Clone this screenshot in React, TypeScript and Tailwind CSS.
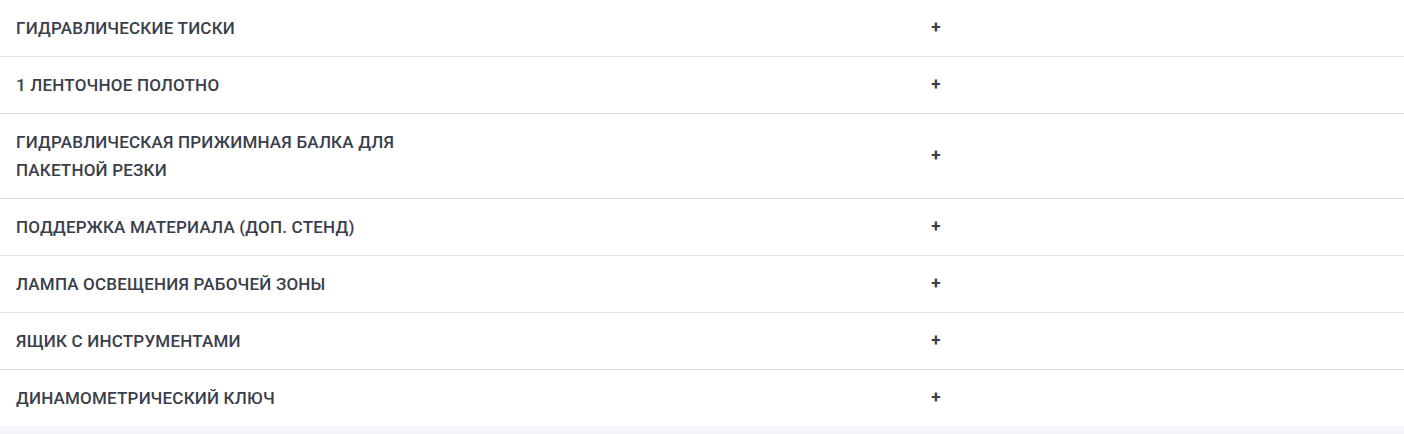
const items = [
  "ГИДРАВЛИЧЕСКИЕ ТИСКИ",
  "1 ЛЕНТОЧНОЕ ПОЛОТНО",
  "ГИДРАВЛИЧЕСКАЯ ПРИЖИМНАЯ БАЛКА ДЛЯ ПАКЕТНОЙ РЕЗКИ",
  "ПОДДЕРЖКА МАТЕРИАЛА (ДОП. СТЕНД)",
  "ЛАМПА ОСВЕЩЕНИЯ РАБОЧЕЙ ЗОНЫ",
  "ЯЩИК С ИНСТРУМЕНТАМИ",
  "ДИНАМОМЕТРИЧЕСКИЙ КЛЮЧ",
];

export default function App() {
  return (
    <div className="min-h-screen bg-[#f4f5f9] font-['Roboto',sans-serif] text-[#393e4b]">
      <div className="bg-white">
        {items.map((item, i) => (
          <div
            key={i}
            className={`grid grid-cols-3 ${i < items.length - 1 ? "border-b border-[#e2e2e2]" : ""}`}
          >
            <div className="px-4 py-[14px] text-[17px] leading-[28px] font-medium tracking-[0.2px]">{item}</div>
            <div className="col-span-2 flex items-center justify-center text-[17px] font-bold">+</div>
          </div>
        ))}
      </div>
    </div>
  );
}
